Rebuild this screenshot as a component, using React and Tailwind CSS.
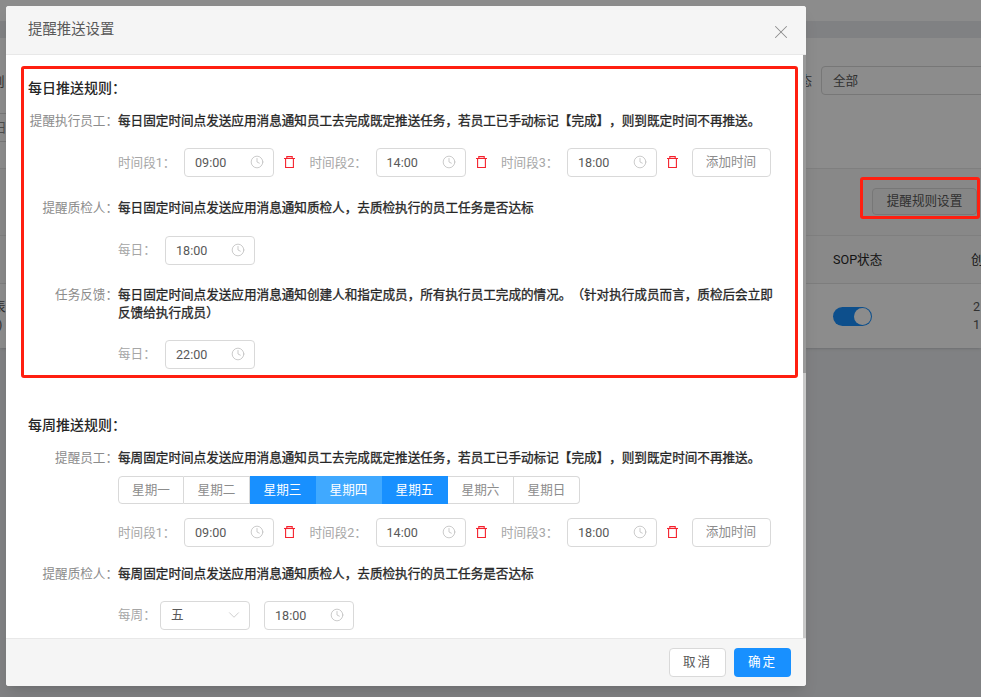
import React from 'react'
import { X, Clock, ChevronDown } from 'lucide-react'

const Trash = () => (
  <svg className="w-[11px] h-[12px] shrink-0" viewBox="0 0 11 12" fill="none" stroke="#f5222d" strokeWidth="1.1">
    <path d="M0 2.5h11" />
    <path d="M2.8 2.2V0.6h5.4v1.6" />
    <path d="M1.6 2.5v9h7.8v-9" />
  </svg>
)

const TimeInput = ({ value, className = '' }) => (
  <div className={`w-[90px] h-[29px] shrink-0 flex items-center justify-between pl-[10px] pr-[9px] rounded border border-[#d9d9d9] bg-white text-[#595959] ${className}`}>
    <span className="pt-[2px]">{value}</span>
    <Clock size={14} strokeWidth={1.4} className="text-[#bfbfbf] -mt-[1px]" />
  </div>
)

const Slot = ({ label, value }) => (
  <div className="flex items-center">
    <span className="w-[66px] pt-px text-[#a6a6a6]">{label}</span>
    <TimeInput value={value} />
    <span className="ml-[10px] mr-[14.5px] -mt-[2px]"><Trash /></span>
  </div>
)

const Slots = ({ className }) => (
  <div className={`flex items-center ml-[90px] ${className}`}>
    <Slot label="时间段1：" value="09:00" />
    <Slot label="时间段2：" value="14:00" />
    <Slot label="时间段3：" value="18:00" />
    <button className="w-[79px] h-[29px] -ml-[1px] rounded border border-[#d9d9d9] bg-white text-[#8c8c8c]">添加时间</button>
  </div>
)

const Rule = ({ label, children, className = '' }) => (
  <div className={`flex leading-[18px] ${className}`}>
    <span className="w-[90px] shrink-0 text-right text-[#8c8c8c]">{label}</span>
    <p className="flex-1 text-[#262626] [-webkit-text-stroke:0.3px_#262626]">{children}</p>
  </div>
)

const Days = () => {
  const days = ['星期一', '星期二', '星期三', '星期四', '星期五', '星期六', '星期日']
  return (
    <div className="flex mt-[9px] ml-[90px] h-[28px]">
      {days.map((d, i) => {
        let tone = 'bg-white text-[#8c8c8c] border-[#d9d9d9]'
        if (i === 2 || i === 4) tone = 'bg-[#1890ff] text-white border-[#1890ff]'
        if (i === 3) tone = 'bg-[#40a9ff] text-white border-[#40a9ff]'
        return (
          <div key={d} className={`w-[66px] flex items-center justify-center border-y border-r first:border-l first:rounded-l last:rounded-r ${tone}`}>{d}</div>
        )
      })}
    </div>
  )
}

const Background = () => (
  <div className="h-full flex flex-col bg-[#e9ebee] text-[#262626]">
    <div className="h-[21px] bg-white" />
    <div className="h-[17px]" />
    <div className="bg-white h-[130px] flex justify-between">
      <div className="-ml-[8px]">
        <p className="mt-[34px] h-[20px] leading-[20px] text-[#595959]">则</p>
        <div className="mt-[21px] w-[60px] h-[29px] border border-[#d9d9d9] pl-[1px] leading-[27px] text-[#8c8c8c]">日</div>
      </div>
      <div className="flex mt-[28px]">
        <span className="mt-[6px] mr-[9px] text-[#595959]">态</span>
        <div className="w-[170px] -mr-[10px] h-[29px] rounded border border-[#d9d9d9] pl-[11px] leading-[27px] text-[#595959]">全部</div>
      </div>
    </div>
    <div className="bg-[#f8f8f8] border-t border-[#e8e8e8] h-[67px] flex justify-end items-start pr-[4px] pt-[19px]">
      <button className="w-[105px] h-[27px] rounded border border-[#d9d9d9] bg-[#f5f5f5] text-[#595959]">提醒规则设置</button>
    </div>
    <div className="bg-[#fafafa] border-y border-[#e8e8e8] h-[49px] flex items-center pl-[833px]">
      <span className="w-[138px] shrink-0 pt-[2px] whitespace-nowrap">SOP状态</span>
      <span className="pt-[2px] whitespace-nowrap">创建人</span>
    </div>
    <div className="relative bg-white h-[64px] flex items-center pl-[833px] shadow-sm">
      <div className="w-[39px] h-[19px] shrink-0 rounded-full bg-[#1890ff] flex justify-end items-center pr-[1px]">
        <div className="w-[17px] h-[17px] rounded-full bg-white" />
      </div>
      <div className="ml-[101px] leading-[18px] text-[#595959]">
        <p>2</p>
        <p>1</p>
      </div>
      <div className="absolute left-[-7px] top-[14px] leading-[18px] text-[#595959]">
        <p>表</p>
        <p className="pl-[5px]">)</p>
      </div>
    </div>
  </div>
)

export default function App() {
  return (
    <div className="relative w-[981px] h-[697px] overflow-hidden text-[12.6px] font-['Roboto','Noto_Sans_CJK_SC',sans-serif] [text-spacing-trim:space-all]">
      <Background />
      <div className="absolute inset-0 bg-black/45" />

      {/* modal */}
      <div className="absolute left-[6px] top-[6px] w-[800px] h-[680px] flex flex-col rounded-[3px] overflow-hidden bg-white shadow-lg">
        <div className="h-[49px] shrink-0 flex items-center justify-between pl-[22px] pr-[14px] bg-[#f5f5f5] border-b border-[#e8e8e8]">
          <span className="text-[14.4px] text-[#595959]">提醒推送设置</span>
          <X size={22} strokeWidth={1.1} className="text-[#8c8c8c] mt-[3px]" />
        </div>

        <div className="flex-1 min-h-0 flex">
          <div className="flex-1 min-w-0 pl-[22px] pr-[23px] pt-[22px]">
            <h3 className="text-[14px] leading-[22px] font-medium text-[#262626]">每日推送规则：</h3>

            <Rule label="提醒执行员工：" className="mt-[13px]">每日固定时间点发送应用消息通知员工去完成既定推送任务，若员工已手动标记【完成】，则到既定时间不再推送。</Rule>
            <Slots className="mt-[18px]" />

            <Rule label="提醒质检人：" className="mt-[22px]">每日固定时间点发送应用消息通知质检人，去质检执行的员工任务是否达标</Rule>
            <div className="flex items-center mt-[19px] ml-[90px]">
              <span className="w-[47px] text-[#a6a6a6]">每日：</span>
              <TimeInput value="18:00" />
            </div>

            <Rule label="任务反馈：" className="mt-[21px]">每日固定时间点发送应用消息通知创建人和指定成员，所有执行员工完成的情况。（针对执行成员而言，质检后会立即反馈给执行成员）</Rule>
            <div className="flex items-center mt-[18px] ml-[90px]">
              <span className="w-[47px] text-[#a6a6a6]">每日：</span>
              <TimeInput value="22:00" />
            </div>

            <h3 className="mt-[45px] text-[14px] leading-[22px] font-medium text-[#262626]">每周推送规则：</h3>
            <Rule label="提醒员工：" className="mt-[13px]">每周固定时间点发送应用消息通知员工去完成既定推送任务，若员工已手动标记【完成】，则到既定时间不再推送。</Rule>
            <Days />
            <Slots className="mt-[14px]" />

            <Rule label="提醒质检人：" className="mt-[18px]">每周固定时间点发送应用消息通知质检人，去质检执行的员工任务是否达标</Rule>
            <div className="flex items-center mt-[18px] ml-[90px]">
              <span className="w-[42px] text-[#a6a6a6]">每周：</span>
              <div className="w-[90px] h-[29px] flex items-center justify-between pl-[10px] pr-[6px] rounded border border-[#d9d9d9] text-[#595959]">
                <span>五</span>
                <ChevronDown size={18} strokeWidth={1} className="text-[#bfbfbf] -mt-[2px]" />
              </div>
              <TimeInput value="18:00" className="ml-[14px]" />
            </div>
          </div>
          {/* scrollbar */}
          <div className="w-[3px] shrink-0 bg-[#c8c8c8]">
            <div className="h-[318px] bg-[#999999]" />
          </div>
        </div>

        <div className="h-[48px] shrink-0 flex items-center justify-end gap-[8px] pr-[15px] bg-[#f5f5f5] border-t border-[#e8e8e8]">
          <button className="w-[57px] h-[29px] rounded border border-[#d9d9d9] bg-white tracking-[2px] text-[#595959]">取消</button>
          <button className="w-[57px] h-[29px] rounded bg-[#1890ff] tracking-[2px] text-white">确定</button>
        </div>
      </div>

      {/* red annotation boxes */}
      <div className="absolute left-[21px] top-[66px] w-[777px] h-[312px] rounded-[3px] border-[3px] border-[#ff1f10]" />
      <div className="absolute left-[860px] top-[177px] w-[120px] h-[42px] rounded-[3px] border-[3px] border-[#ff1f10]" />
    </div>
  )
}
